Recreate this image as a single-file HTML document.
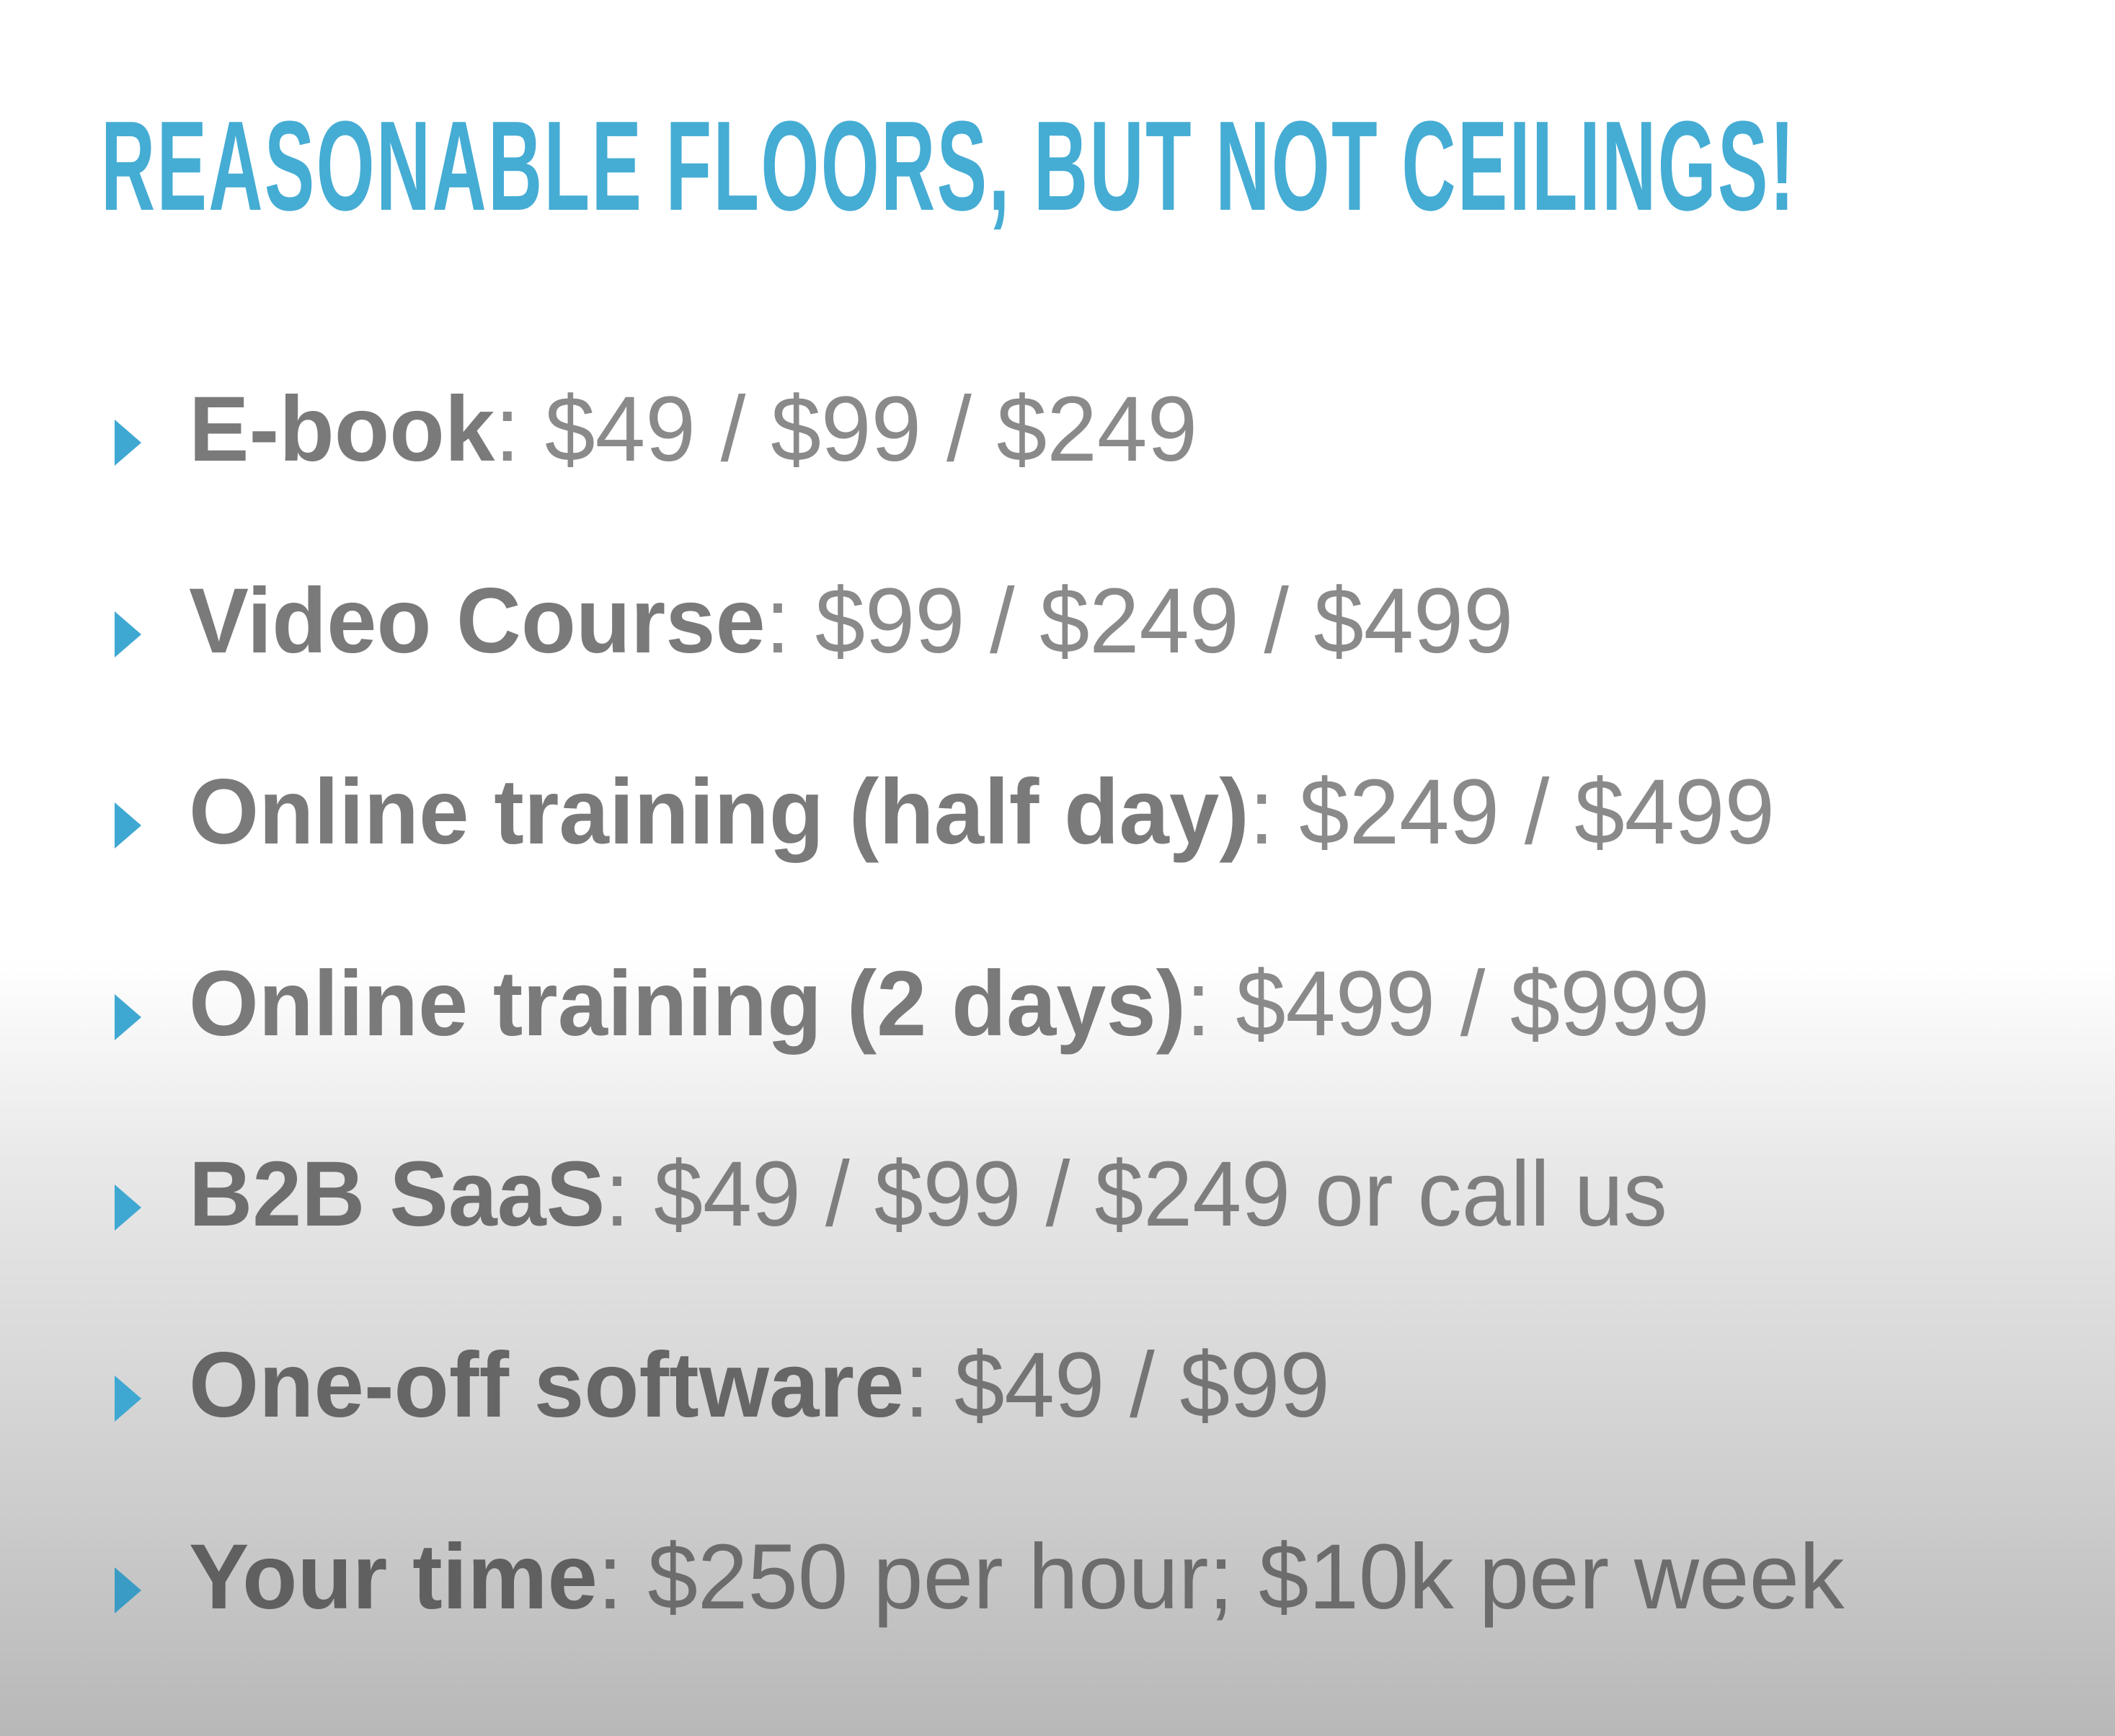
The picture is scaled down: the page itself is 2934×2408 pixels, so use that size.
<!DOCTYPE html>
<html><head><meta charset="utf-8"><style>
html,body{margin:0;padding:0}
body{width:2934px;height:2408px;overflow:hidden;position:relative;
background:linear-gradient(to bottom,#ffffff 0px,#ffffff 1330px,#e8e8e8 1620px,#d2d2d2 2000px,#b8b8b8 2408px);
font-family:"Liberation Sans",sans-serif}
.t{position:absolute;left:140px;top:142px;font-weight:bold;font-size:177px;line-height:177px;color:#45acd4;white-space:nowrap;transform-origin:0 0;letter-spacing:4px}
.row{position:absolute;left:262px;font-size:128px;line-height:128px;white-space:nowrap;transform-origin:0 0;color:#8a8a8a}
.row b{color:#7a7a7a}
.tri{position:absolute;left:159px;width:0;height:0;border-top:32px solid transparent;border-bottom:32px solid transparent;border-left:37px solid #3fa8d2}
</style></head><body>
<div class="t" id="t">REASONABLE FLOORS, BUT NOT CEILINGS!</div>

<div class="tri" style="top:582px"></div>
<div class="row" data-w="1399" data-b="640"><b>E-book</b>: $49 / $99 / $249</div>
<div class="tri" style="top:848px"></div>
<div class="row" data-w="1837" data-b="906"><b>Video Course</b>: $99 / $249 / $499</div>
<div class="tri" style="top:1113px"></div>
<div class="row" data-w="2200" data-b="1171"><b>Online training (half day)</b>: $249 / $499</div>
<div class="tri" style="top:1379px"></div>
<div class="row" data-w="2110" data-b="1437"><b>Online training (2 days)</b>: $499 / $999</div>
<div class="tri" style="top:1643px"></div>
<div class="row" data-w="2051" data-b="1701" style="color:#7e7e7e"><b style="color:#6e6e6e">B2B SaaS</b>: $49 / $99 / $249 or call us</div>
<div class="tri" style="top:1908px"></div>
<div class="row" data-w="1583" data-b="1966" style="color:#747474"><b style="color:#666">One-off software</b>: $49 / $99</div>
<div class="tri" style="top:2174px;border-left-color:#3a9cc4"></div>
<div class="row" data-w="2297" data-b="2232" style="color:#6c6c6c"><b style="color:#606060">Your time</b>: $250 per hour; $10k per week</div>
<script>
var t=document.getElementById('t');
t.style.transform='scaleX('+(2352/t.scrollWidth)+')';
document.querySelectorAll('.row').forEach(function(r){
 var w=+r.getAttribute('data-w'),b=+r.getAttribute('data-b');
 r.style.top=(b-108)+'px';
 r.style.transform='scaleX('+(w/r.scrollWidth)+')';
});
</script>
</body></html>
